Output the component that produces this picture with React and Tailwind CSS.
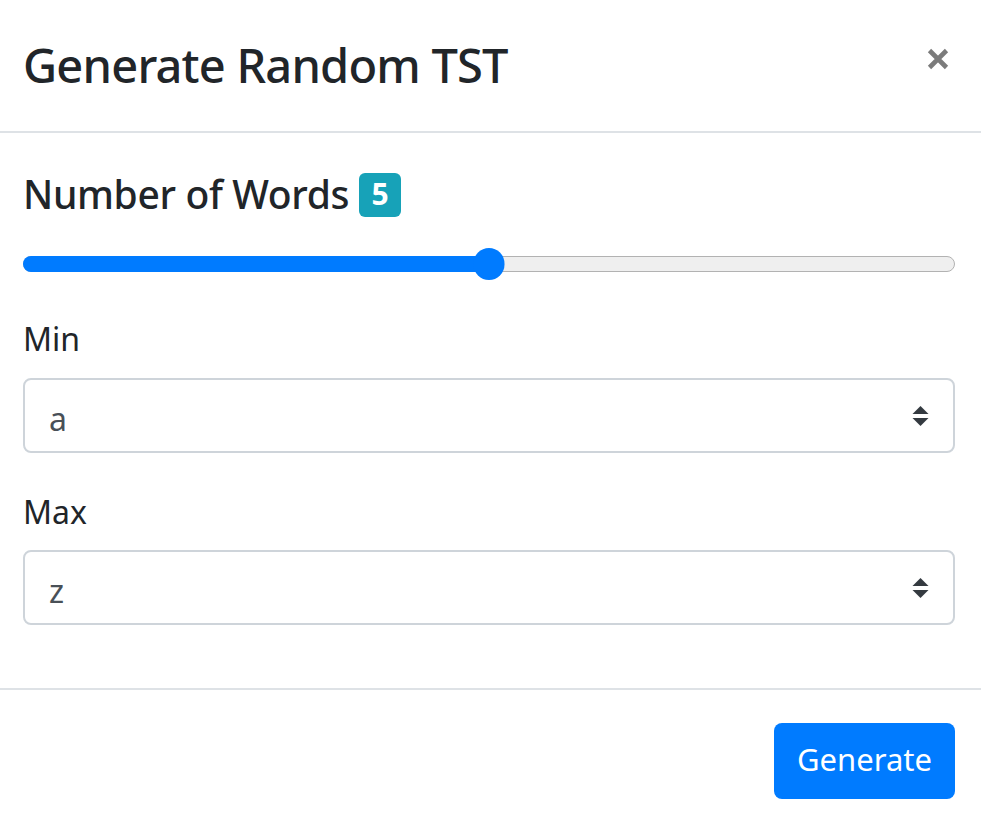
import React, { useState } from 'react';

const font = { fontFamily: '"Noto Sans", "Open Sans", sans-serif' };

function SelectBox({ value }){
  return (
    <div className="h-[75px] border-2 border-[#ced4da] rounded-[8px] flex items-center justify-between pl-[24px] pr-[24px]">
      <span className="text-[32px] text-[#495057] leading-none pt-[6px]">{value}</span>
      <svg width="17" height="20" viewBox="0 0 4 5" className="block">
        <path d="M2 0L0 2h4zm0 5L0 3h4z" fill="#343a40" />
      </svg>
    </div>
  );
}

export default function App(){
  const [words] = useState(5);
  const pct = 50;

  return (
    <div className="w-[981px] h-[831px] bg-white text-[#212529] overflow-hidden" style={font}>
      {/* header */}
      <div className="h-[133px] border-b-2 border-[#dee2e6] flex items-start justify-between pl-[23px] pr-[32px]">
        <h4 className="text-[47px] font-medium leading-none mt-[42px] tracking-[-0.8px]">Generate Random TST</h4>
        <svg width="22" height="22" viewBox="0 0 22 22" className="mt-[48px]">
          <path d="M2.5 2.5L19.5 19.5M19.5 2.5L2.5 19.5" stroke="#7b7b7b" strokeWidth="4.6" strokeLinecap="butt" />
        </svg>
      </div>

      {/* body */}
      <div className="h-[557px] border-b-2 border-[#dee2e6] pl-[23px] pr-[26px] pt-[40px]">
        <div className="flex items-center gap-[10px] h-[44px]">
          <span className="text-[39px] font-medium leading-none tracking-[-0.35px] pb-[4px]">Number of Words</span>
          <span className="bg-[#17a2b8] text-white text-[30px] font-bold leading-none rounded-[6px] w-[42px] h-[44px] flex items-center justify-center pb-[3px]">{words}</span>
        </div>

        <div className="relative h-[32px] mt-[31px]">
          <div className="absolute left-0 right-0 top-[8px] h-[16px] rounded-full bg-[#efefef] border border-[#b2b2b2]" />
          <div className="absolute left-0 top-[8px] h-[16px] rounded-full bg-[#007bff]" style={{ width: `${pct}%` }} />
          <div className="absolute top-0 w-[31px] h-[32px] rounded-full bg-[#007bff] -translate-x-1/2" style={{ left: `${pct}%` }} />
        </div>

        <div className="text-[32px] leading-none mt-[43px]">Min</div>
        <div className="mt-[23px]"><SelectBox value="a" /></div>

        <div className="text-[32px] leading-none mt-[43px]">Max</div>
        <div className="mt-[22px]"><SelectBox value="z" /></div>
      </div>

      {/* footer */}
      <div className="flex justify-end pr-[26px] pt-[33px]">
        <button className="bg-[#007bff] text-white text-[31px] leading-none rounded-[8px] w-[181px] h-[76px] flex items-center justify-center pb-[4px]">Generate</button>
      </div>
    </div>
  );
}
